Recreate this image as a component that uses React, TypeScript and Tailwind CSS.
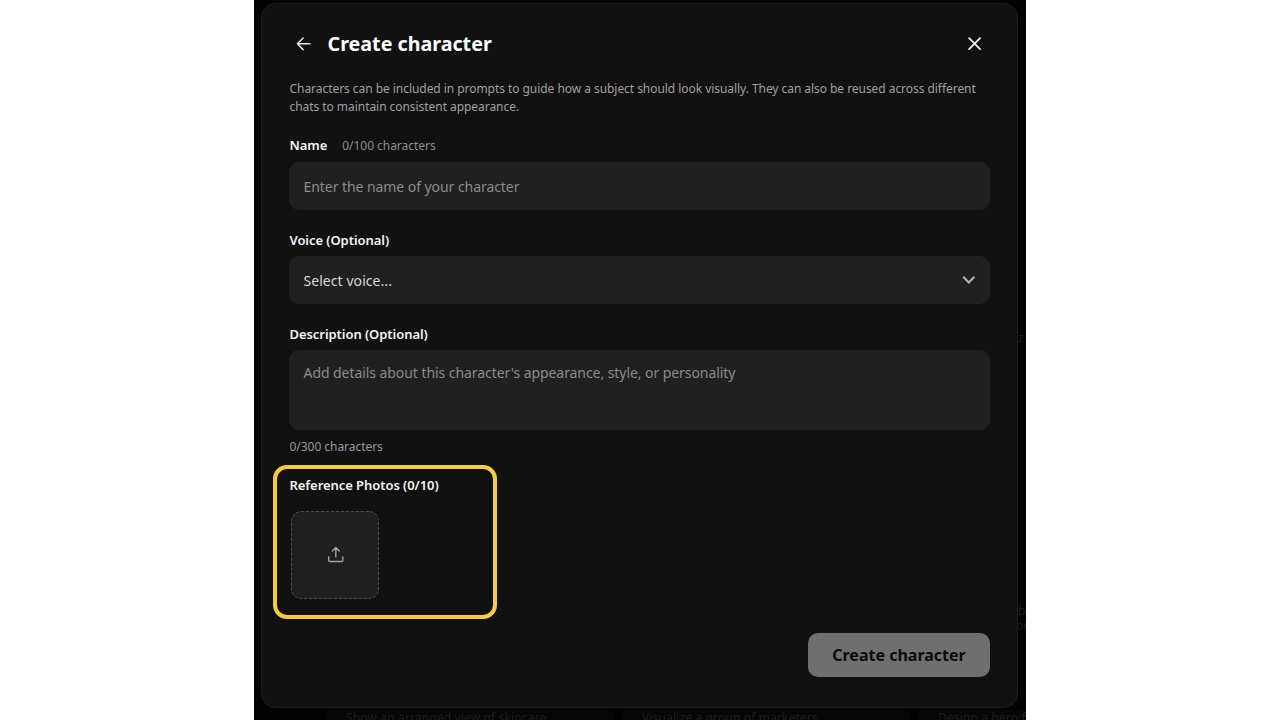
import React from 'react';

const suggestions = ['Show an arranged view of skincare', 'Visualize a group of marketers', 'Design a hero for'];

const Label: React.FC<{ children: React.ReactNode }> = ({ children }) => (
  <span className="pl-[0.5px] text-[13px] leading-5 font-semibold tracking-[-0.06px] text-[#f4f4f4] whitespace-nowrap">
    {children}
  </span>
);

const Backdrop: React.FC = () => (
  <div className="absolute inset-0 text-[12px] leading-4 text-[#1d1d1d] whitespace-nowrap">
    <span className="absolute left-[764px] top-[330px]">z</span>
    <span className="absolute left-[764px] top-[603px]">b</span>
    <span className="absolute left-[762px] top-[618px]">or</span>
    <div className="absolute left-[72px] top-[710px] flex gap-2 tracking-[0.15px]">
      {suggestions.map((text) => (
        <div key={text} className="w-[288px] shrink-0 bg-[#060606] px-5">
          {text}
        </div>
      ))}
    </div>
  </div>
);

const Header: React.FC = () => (
  <header className="flex h-10 items-center justify-between pl-[7px] pr-2">
    <div className="flex items-center gap-[16.5px]">
      <svg className="mb-px" width="15" height="14" viewBox="0 0 15 14" fill="none" stroke="#e8e8e8" strokeWidth="1.5" strokeLinecap="round" strokeLinejoin="round">
        <path d="M13.8 6.8H1.4M7.1 1 1.4 6.8l5.7 5.8" />
      </svg>
      <h1 className="text-[19.7px] leading-7 font-bold text-white">Create character</h1>
    </div>
    <svg className="mb-px" width="14" height="14" viewBox="0 0 14 14" fill="none" stroke="#f2f2f2" strokeWidth="1.7" strokeLinecap="round">
      <path d="m1.1 1.1 11 11M12.1 1.1l-11 11" />
    </svg>
  </header>
);

const App: React.FC = () => {
  return (
    <div className="h-[720px] w-[1280px] overflow-hidden bg-white font-['Noto_Sans','Open_Sans',sans-serif]">
      <div className="relative mx-auto h-[720px] w-[772px] overflow-hidden bg-[#020202] pt-[3px] pl-[7px]">
        <Backdrop />
        <main className="relative h-[705px] w-[757px] rounded-[14px] border border-[#1c1c1c] bg-[#111111] px-[27px] pt-5">
          <Header />

          <p className="mt-4 pl-[0.5px] text-[12px] leading-[17.6px] tracking-[-0.05px] text-[#a0a0a0] whitespace-nowrap">
            Characters can be included in prompts to guide how a subject should look visually. They can also be reused across different
            <br />
            chats to maintain consistent appearance.
          </p>

          <div className="mt-5 flex items-center gap-[15px]">
            <Label>Name</Label>
            <span className="pt-px text-[12px] leading-[19px] tracking-[-0.04px] text-[#8e8e8e]">0/100 characters</span>
          </div>
          <div className="mt-[6.5px] flex h-12 items-center rounded-[10px] bg-[#202020] px-[14.5px] text-[14px] tracking-[-0.06px] text-[#8b8b8b]">
            <span className="pt-px">Enter the name of your character</span>
          </div>

          <div className="mt-5 flex">
            <Label>Voice (Optional)</Label>
          </div>
          <div className="mt-1.5 flex h-12 items-center justify-between rounded-[10px] bg-[#202020] px-[14.5px] text-[14px] tracking-[0.06px] text-[#d8d8d8]">
            <span className="pt-px">Select voice...</span>
            <svg width="14" height="9" viewBox="0 0 14 9" fill="none" stroke="#b4b4b4" strokeWidth="2.1">
              <path d="M1.2 1.8 6.8 7.4l5.6-5.6" />
            </svg>
          </div>

          <div className="mt-5 flex">
            <Label>Description (Optional)</Label>
          </div>
          <div className="mt-1.5 h-20 rounded-[10px] bg-[#202020] px-[14.5px] pt-[13px] text-[14px] leading-5 tracking-[-0.065px] text-[#8b8b8b]">
            Add details about this character's appearance, style, or personality
          </div>
          <div className="mt-[7px] pl-[0.5px] text-[12px] leading-5 tracking-[-0.04px] text-[#9a9a9a]">0/300 characters</div>

          <section className="relative mt-[18px] h-[124px]">
            <div className="absolute -top-[10px] -left-4 h-[154px] w-[224px] rounded-[14px] border-4 border-[#f9cb40]" />
            <div className="flex">
              <Label>Reference Photos (0/10)</Label>
            </div>
            <div className="mt-4 ml-0.5 flex size-[88px] items-center justify-center rounded-[10px] border border-dashed border-[#505050] bg-[#202020]">
              <svg width="17" height="17" viewBox="0 0 17 17" fill="none" stroke="#a3a3a3" strokeWidth="1.4" strokeLinecap="round" strokeLinejoin="round">
                <path d="M8.8 10.9V1.6M5.4 4.9l3.4-3.4 3.4 3.4M1.7 11v3.2q0 1.3 1.3 1.3h11.6q1.3 0 1.3-1.3V11" />
              </svg>
            </div>
          </section>

          <div className="mt-[34px] flex justify-end">
            <button className="h-11 w-[182px] rounded-[10px] bg-[#6f6f6f] text-[16px] font-bold text-[#0c0c0c]">
              Create character
            </button>
          </div>
        </main>
      </div>
    </div>
  );
};

export default App;
